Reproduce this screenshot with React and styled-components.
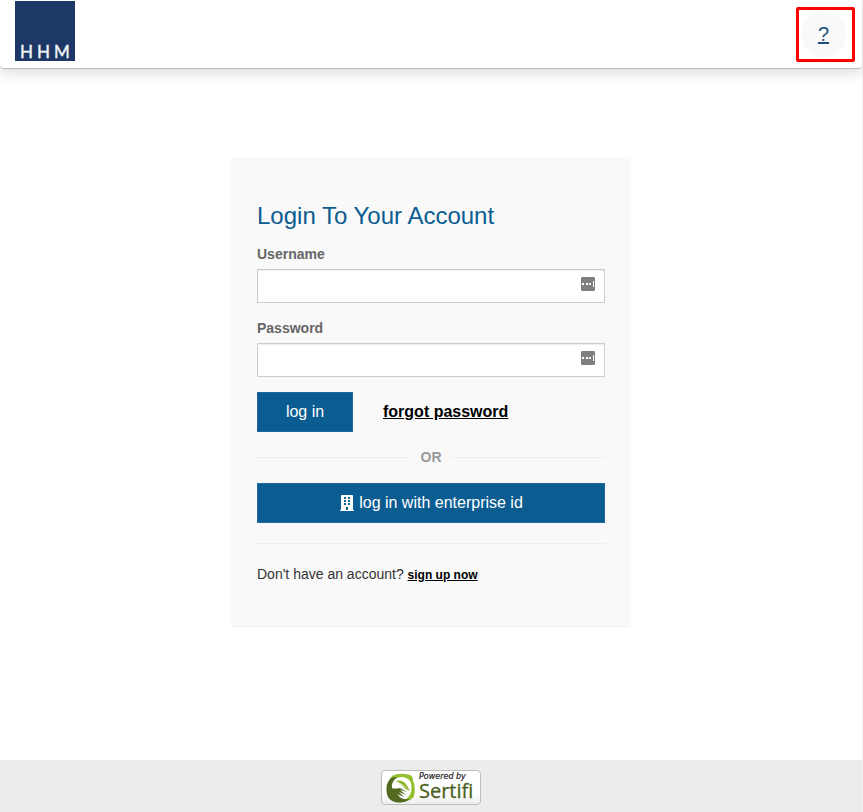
import React from "react";
import styled, { createGlobalStyle } from "styled-components";
import { FaBuilding } from "react-icons/fa";

const GlobalStyle = createGlobalStyle`
  *, *::before, *::after { box-sizing: border-box; }
  body {
    margin: 0;
    background: #fff;
    color: #333;
    font: 14px/20px "Liberation Sans", Arial, sans-serif;
  }
`;

const Page = styled.div`
  min-height: 100vh;
  display: flex;
  flex-direction: column;
  border-right: 1px solid #f1f1f1;
`;

const Header = styled.header`
  display: flex;
  justify-content: space-between;
  align-items: flex-start;
  height: 69px;
  padding: 1px 7px 0 15px;
  background: #fff;
  border-bottom: 1px solid #bdbdbd;
  border-radius: 4px;
  box-shadow: 0 4px 14px rgba(0, 0, 0, 0.14);
`;

const BrandLink = styled.a`
  display: block;
  height: 60px;
  svg { display: block; }
`;

const HelpFrame = styled.div`
  display: flex;
  align-items: center;
  width: 59px;
  height: 55px;
  margin-top: 6px;
  padding-left: 2px;
  border: 3px solid #fe0000;
  border-radius: 2px;
`;

const HelpLink = styled.a`
  width: 45px;
  height: 45px;
  border-radius: 50%;
  background: #f9f9f9;
  color: #1d4f7c;
  font-size: 20px;
  line-height: 45px;
  text-align: center;
`;

const Main = styled.main`
  flex: 1;
  display: flex;
  justify-content: center;
  align-items: flex-start;
  padding: 88px 16px 32px;
`;

const Card = styled.section`
  width: 100%;
  max-width: 400px;
  padding: 44px 26px 41px;
  background: #f9f9f9;
  border-bottom: 1px solid #f1f1f1;
  border-radius: 4px;
`;

const Title = styled.h1`
  margin: 0 0 14px;
  color: #0b5c91;
  font-size: 24px;
  font-weight: 400;
  line-height: 29px;
`;

const Field = styled.div`
  margin-bottom: 15px;
`;

const Label = styled.label`
  display: block;
  margin-bottom: 5px;
  color: #666;
  font-weight: 700;
`;

const InputWrap = styled.div`
  position: relative;
  svg {
    position: absolute;
    top: 8px;
    right: 10px;
  }
`;

const Input = styled.input`
  display: block;
  width: 100%;
  height: 34px;
  padding: 6px 32px 6px 12px;
  border: 1px solid #ccc;
  border-radius: 0;
  background: #fff;
  box-shadow: inset 0 1px 1px rgba(0, 0, 0, 0.075);
  font: inherit;
`;

const Actions = styled.div`
  display: flex;
  align-items: center;
  gap: 30px;
`;

const Button = styled.button`
  display: flex;
  justify-content: center;
  align-items: center;
  gap: 4px;
  width: ${(p) => (p.$wide ? "100%" : "96px")};
  height: 40px;
  padding: 0;
  border: 1px solid #2168a0;
  background: #0b5c91;
  color: #fff;
  font-family: inherit;
  font-size: 16px;
  line-height: 20px;
  cursor: pointer;
`;

const TextLink = styled.a`
  color: #000;
  font-weight: 700;
  font-size: ${(p) => (p.$small ? "12px" : "16px")};
`;

const OrDivider = styled.div`
  display: flex;
  align-items: center;
  gap: 10px;
  margin: 15px 0 16px;
  color: #999;
  font-weight: 700;
  &::before, &::after {
    content: "";
    flex: 1;
    height: 1px;
    background: #eee;
  }
`;

const Rule = styled.hr`
  margin: 20px 0;
  border: 0;
  border-top: 1px solid #eee;
`;

const SignUp = styled.p`
  margin: 0;
`;

const Footer = styled.footer`
  display: flex;
  justify-content: center;
  height: 52px;
  padding-top: 10px;
  background: #ececea;
`;

const Badge = styled.a`
  display: flex;
  align-items: center;
  gap: 3px;
  width: 100px;
  height: 35px;
  padding: 0 4px;
  border: 1px solid #bdbdbd;
  border-radius: 4px;
  background: linear-gradient(#fff 65%, #ededed);
  text-decoration: none;
`;

const BadgeText = styled.span`
  display: flex;
  flex-direction: column;
  padding-bottom: 3px;
  color: #49611c;
  font-family: "Open Sans", "Noto Sans", sans-serif;
  font-size: 20px;
  line-height: 19px;
  -webkit-text-stroke: 0.3px #49611c;
`;

const BadgeCaption = styled.span`
  color: #222;
  font-family: "DejaVu Sans", sans-serif;
  font-size: 8px;
  font-style: italic;
  line-height: 9px;
  -webkit-text-stroke: 0.2px #222;
`;

const LogoText = styled.text`
  fill: #f2f4f8;
  stroke: #f2f4f8;
  stroke-width: 0.4px;
  font-family: Lato, sans-serif;
  font-size: 17px;
`;

function HotelLogo() {
  return (
    <svg width="60" height="60" viewBox="0 0 60 60" aria-hidden="true">
      <rect width="60" height="60" fill="#1d3867" />
      <LogoText x="5 22 39" y="57">HHM</LogoText>
    </svg>
  );
}

function AutofillIcon() {
  return (
    <svg width="14" height="14" viewBox="0 0 14 14" aria-hidden="true">
      <rect width="14" height="14" rx="1" fill="#7f7f7f" />
      <path d="M1 6h2v2H1zM5 6h2v2H5zM8 6h2v2H8zM12 4h1v6h-1z" fill="#fff" />
    </svg>
  );
}

function SertifiMark() {
  return (
    <svg width="30" height="30" viewBox="0 0 30 30" aria-hidden="true">
      <path d="M6 3Q13 -1 24 2Q27 3 27 7Q30 14 28 23Q26 28 17 28Q23 25 25 19Q27 10 22 6Q16 2 9 6Q6 8 4 11Q3 6 6 3Z" fill="#94bf30" />
      <path d="M4 6Q-1 12 1 21Q2 27 9 29Q18 31 24 26Q15 27 10 22Q5 17 6 11Q7 7 11 4Q6 4 4 6Z" fill="#52691f" />
      <path d="M10 8Q16 6 20 11L24 18L16 14L21 15L13 11L19 13Z" fill="#8cb52b" />
      <path d="M5 15Q9 16 14 15L21 19L14 17L20 22L13 19L18 24L11 21L15 25Q8 24 5 15Z" fill="#52691f" />
    </svg>
  );
}

function LoginField({ id, label, type }) {
  return (
    <Field>
      <Label htmlFor={id}>{label}</Label>
      <InputWrap>
        <Input id={id} name={id} type={type} />
        <AutofillIcon />
      </InputWrap>
    </Field>
  );
}

export default function App() {
  return (
    <Page>
      <GlobalStyle />
      <Header>
        <BrandLink href="#" aria-label="HHM">
          <HotelLogo />
        </BrandLink>
        <HelpFrame>
          <HelpLink href="#help">?</HelpLink>
        </HelpFrame>
      </Header>
      <Main>
        <Card>
          <Title>Login To Your Account</Title>
          <form onSubmit={(e) => e.preventDefault()}>
            <LoginField id="username" label="Username" type="text" />
            <LoginField id="password" label="Password" type="password" />
            <Actions>
              <Button type="submit">log in</Button>
              <TextLink href="#forgot">forgot password</TextLink>
            </Actions>
          </form>
          <OrDivider>OR</OrDivider>
          <Button type="button" $wide>
            <FaBuilding size={16} aria-hidden="true" />
            log in with enterprise id
          </Button>
          <Rule />
          <SignUp>
            Don't have an account? <TextLink href="#signup" $small>sign up now</TextLink>
          </SignUp>
        </Card>
      </Main>
      <Footer>
        <Badge href="#sertifi">
          <SertifiMark />
          <BadgeText>
            <BadgeCaption>Powered by</BadgeCaption>
            Sertifi
          </BadgeText>
        </Badge>
      </Footer>
    </Page>
  );
}
